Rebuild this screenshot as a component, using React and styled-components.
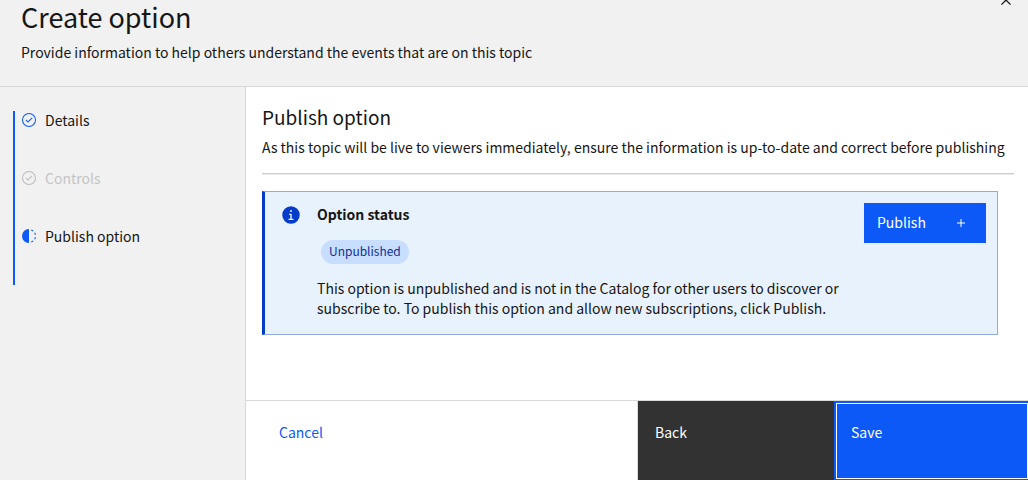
import React from "react";
import styled, { createGlobalStyle, css } from "styled-components";

const GlobalStyle = createGlobalStyle`
  *, *::before, *::after { box-sizing: border-box; }
  html, body { margin: 0; padding: 0; overflow: hidden; }
  body {
    background: #ffffff;
    color: #161616;
    font-family: "Noto Sans CJK SC", "Liberation Sans", sans-serif;
    font-size: 14px;
    line-height: 20px;
  }
  h1, h2, h3, p, ol { margin: 0; padding: 0; }
  button { font: inherit; border: 0; margin: 0; cursor: pointer; }
`;

const Page = styled.div`
  display: flex;
  flex-direction: column;
  min-height: calc(100vh + 1px);
`;

const Header = styled.header`
  display: flex;
  justify-content: space-between;
  align-items: flex-start;
  height: 87px;
  padding: 0 12px 0 21px;
  background: #f1f1f1;
  border-bottom: 1px solid #d9d9d9;
`;

const Title = styled.h1`
  font-size: 27px;
  line-height: 34px;
  font-weight: 400;
`;

const Subtitle = styled.p`
  margin-top: 8px;
`;

const CloseButton = styled.button`
  display: flex;
  padding: 0;
  margin-top: -10px;
  background: transparent;
  color: #161616;
`;

const Body = styled.div`
  display: flex;
  flex: 1;
`;

const Sidebar = styled.nav`
  flex: 0 0 246px;
  padding: 24px 13px;
  background: #f1f1f1;
  border-right: 1px solid #d9d9d9;
`;

const Steps = styled.ol`
  list-style: none;
  border-left: 2px solid #0d59f8;
`;

const Step = styled.li`
  display: flex;
  align-items: flex-start;
  gap: 8px;
  height: 58px;
  padding-left: 6px;
  line-height: 18px;
  color: ${(p) => (p.$disabled ? "#c4c4c4" : "#161616")};

  svg {
    margin-top: 1px;
    color: ${(p) => (p.$disabled ? "#bdbdbd" : "#0d59f8")};
  }
`;

const Main = styled.main`
  display: flex;
  flex: 1;
  flex-direction: column;
  min-width: 0;
  margin-right: -2px;
`;

const Content = styled.section`
  flex: 1;
  padding: 17px 16px 0;
`;

const SectionTitle = styled.h2`
  font-size: 19px;
  line-height: 26px;
  font-weight: 400;
`;

const Description = styled.p`
  margin-top: 7px;
`;

const Divider = styled.hr`
  height: 2px;
  margin: 16px 0;
  border: 0;
  border-top: 1px solid #cfcfcf;
  border-bottom: 1px solid #ebebeb;
`;

const Notice = styled.div`
  display: flex;
  align-items: flex-start;
  min-height: 144px;
  margin-right: 16px;
  padding: 11px 11px 15px 16px;
  background: #e8f2fd;
  border: 1px solid #8fabe0;
  border-left: 3px solid #053bc9;
`;

const NoticeIcon = styled.span`
  display: flex;
  margin: 2px 16px 0 0;
  color: #053bc9;
`;

const NoticeBody = styled.div`
  flex: 1;
  padding-top: 1px;
`;

const NoticeTitle = styled.h3`
  font-size: 14px;
  line-height: 20px;
  font-weight: 700;
`;

const Tag = styled.span`
  display: flex;
  align-items: center;
  width: fit-content;
  height: 24px;
  margin: 16px 4px 14px;
  padding: 0 8px 2px;
  border-radius: 12px;
  background: #c8deff;
  color: #0e2e99;
  font-size: 12px;
`;

const NoticeText = styled.p`
  max-width: 535px;
`;

const PublishButton = styled.button`
  display: flex;
  align-items: center;
  justify-content: space-between;
  width: 122px;
  height: 40px;
  padding: 0 17px 0 13px;
  background: #0d59f8;
  color: #ffffff;

  span {
    padding-bottom: 2px;
  }
`;

const Footer = styled.footer`
  display: grid;
  grid-template-columns: 2fr 1fr 1fr;
  height: 81px;
  border-top: 1px solid #d9d9d9;
`;

const variants = {
  ghost: css`
    padding-left: 33px;
    background: #ffffff;
    color: #0d59f8;
    border-right: 1px solid #d9d9d9;
  `,
  secondary: css`
    background: #323232;
    color: #ffffff;
  `,
  primary: css`
    background: #0d59f8;
    color: #ffffff;
    outline: 1px solid #ffffff;
    outline-offset: -3px;
  `,
};

const ActionButton = styled.button`
  display: flex;
  align-items: flex-start;
  padding: 21px 17px;
  text-align: left;
  ${(p) => variants[p.$variant]}
`;

const Icon = ({ size = 16, children }) => (
  <svg width={size} height={size} viewBox="0 0 32 32" fill="currentColor" aria-hidden="true">
    {children}
  </svg>
);

const CheckOutline = () => (
  <Icon>
    <path d="M14 21.414L9 16.413 10.413 15 14 18.586 21.585 11 23 12.415 14 21.414z" />
    <path d="M16,2A14,14,0,1,0,30,16,14,14,0,0,0,16,2Zm0,26A12,12,0,1,1,28,16,12,12,0,0,1,16,28Z" />
  </Icon>
);

const HalfDone = () => (
  <Icon>
    <path d="M23.7642 6.8593l1.2851-1.5315a13.976 13.976 0 00-4.1818-2.44l-.6836 1.8776A11.9729 11.9729 0 0123.7642 6.8593zM27.81 14l1.9677-.4128A13.8888 13.8888 0 0028.14 9.0457L26.4087 10A12.52 12.52 0 0127.81 14zM20.1836 27.2354l.6836 1.8776a13.976 13.976 0 004.1818-2.44l-1.2851-1.5315A11.9729 11.9729 0 0120.1836 27.2354zM26.4087 22L28.14 23a14.14 14.14 0 001.6382-4.5872L27.81 18.0659A12.1519 12.1519 0 0126.4087 22zM16 30V2a14 14 0 000 28z" />
  </Icon>
);

const steps = [
  { label: "Details", icon: CheckOutline },
  { label: "Controls", icon: CheckOutline, disabled: true },
  { label: "Publish option", icon: HalfDone },
];

export default function App() {
  return (
    <>
      <GlobalStyle />
      <Page>
        <Header>
          <div>
            <Title>Create option</Title>
            <Subtitle>
              Provide information to help others understand the events that are on this topic
            </Subtitle>
          </div>
          <CloseButton type="button" aria-label="Close">
            <Icon size={20}>
              <path d="M24 9.4L22.6 8 16 14.6 9.4 8 8 9.4 14.6 16 8 22.6 9.4 24 16 17.4 22.6 24 24 22.6 17.4 16 24 9.4z" />
            </Icon>
          </CloseButton>
        </Header>
        <Body>
          <Sidebar aria-label="Progress">
            <Steps>
              {steps.map(({ label, icon: StepIcon, disabled }) => (
                <Step key={label} $disabled={disabled}>
                  <StepIcon />
                  <span>{label}</span>
                </Step>
              ))}
            </Steps>
          </Sidebar>
          <Main>
            <Content>
              <SectionTitle>Publish option</SectionTitle>
              <Description>
                As this topic will be live to viewers immediately, ensure the information is
                up-to-date and correct before publishing
              </Description>
              <Divider />
              <Notice>
                <NoticeIcon>
                  <Icon size={20}>
                    <path d="M16,2A14,14,0,1,0,30,16,14,14,0,0,0,16,2Zm0,6a1.5,1.5,0,1,1-1.5,1.5A1.5,1.5,0,0,1,16,8Zm4,16.125H12v-2.25h2.875v-5.75H13v-2.25h4.125v8H20Z" />
                  </Icon>
                </NoticeIcon>
                <NoticeBody>
                  <NoticeTitle>Option status</NoticeTitle>
                  <Tag>Unpublished</Tag>
                  <NoticeText>
                    This option is unpublished and is not in the Catalog for other users to discover
                    or subscribe to. To publish this option and allow new subscriptions, click
                    Publish.
                  </NoticeText>
                </NoticeBody>
                <PublishButton type="button">
                  <span>Publish</span>
                  <Icon>
                    <path d="M17 15V8h-2v7H8v2h7v7h2v-7h7v-2z" />
                  </Icon>
                </PublishButton>
              </Notice>
            </Content>
            <Footer>
              <ActionButton type="button" $variant="ghost">Cancel</ActionButton>
              <ActionButton type="button" $variant="secondary">Back</ActionButton>
              <ActionButton type="button" $variant="primary">Save</ActionButton>
            </Footer>
          </Main>
        </Body>
      </Page>
    </>
  );
}
